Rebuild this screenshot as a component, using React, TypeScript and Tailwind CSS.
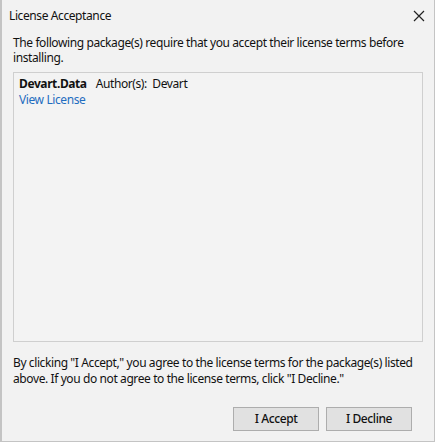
import React from "react";

export default function App() {
  return (
    <div className="w-[436px] h-[443px] bg-white tracking-[-0.4px]" style={{ fontFamily: '"Noto Sans", "Open Sans", sans-serif' }}>
      <div className="w-[435px] h-[442px] bg-[#f2f2f2] border-l-2 border-r border-b border-[#c4c4c4] flex flex-col text-[12px] text-[#111111]">
        <div className="h-[32px] flex items-center justify-between pl-[7px] pr-[8px]">
          <span className="leading-none">License Acceptance</span>
          <svg width="12" height="12" viewBox="0 0 12 12" className="mr-[1px]">
            <path d="M1 1 L11 11 M11 1 L1 11" stroke="#222" strokeWidth="1.2" />
          </svg>
        </div>
        <div className="px-[11px] pt-[3px] leading-[15px]">
          The following package(s) require that you accept their license terms before installing.
        </div>
        <div className="mx-[11px] mt-[7px] h-[270px] border border-[#cfcfcf] bg-[#f3f3f3] px-[5px] pt-[3px] leading-[16px]">
          <div className="flex">
            <span className="font-bold">Devart.Data</span>
            <span className="ml-[9px]">Author(s):&nbsp;&nbsp;Devart</span>
          </div>
          <div className="text-[#1f6dc0]">View License</div>
        </div>
        <div className="px-[11px] pt-[13px] leading-[16px]">
          By clicking "I Accept," you agree to the license terms for the package(s) listed above. If you do not agree to the license terms, click "I Decline."
        </div>
        <div className="flex-1" />
        <div className="flex justify-end gap-[7px] pr-[22px] pb-[10px]">
          <button className="w-[86px] h-[24px] bg-[#e1e1e1] border border-[#adadad] text-[12px] text-[#111111] font-medium leading-none">I Accept</button>
          <button className="w-[86px] h-[24px] bg-[#e1e1e1] border border-[#adadad] text-[12px] text-[#111111] font-medium leading-none">I Decline</button>
        </div>
      </div>
    </div>
  );
}
